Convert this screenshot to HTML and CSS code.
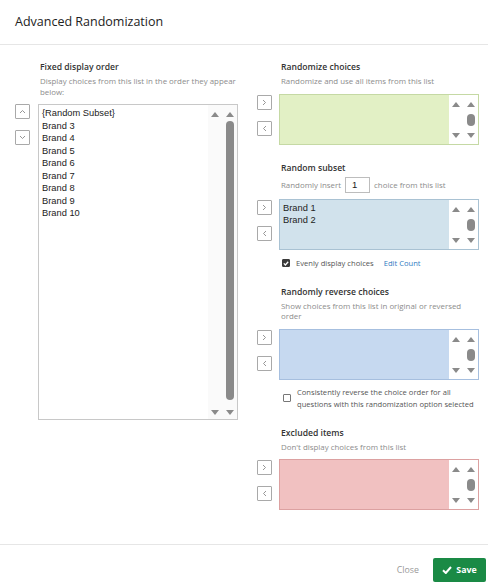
FILE: index.html
```html
<!DOCTYPE html>
<html lang="en">
<head>
  <meta charset="UTF-8" />
  <meta name="viewport" content="width=device-width, initial-scale=1.0" />
  <title>Advanced Randomization</title>
  <link rel="stylesheet" href="styles.css">
</head>
<body>
  <div class="modal">
    <header class="modal-head">
      <h1>Advanced Randomization</h1>
    </header>

    <main class="modal-body">
      <!-- left: fixed order -->
      <section class="pane pane-left">
        <div class="pane-head">
          <h2>Fixed display order</h2>
          <p class="desc">Display choices from this list in the order they appear below:</p>
        </div>
        <div class="btns">
          <button class="mv"><svg width="7" height="5" viewBox="0 0 7 5"><path d="M1 4 L3.5 1.5 L6 4" /></svg></button>
          <button class="mv"><svg width="7" height="5" viewBox="0 0 7 5"><path d="M1 1 L3.5 3.5 L6 1" /></svg></button>
        </div>
        <div class="box box-fixed">
          <ul class="items">
            <li>{Random Subset}</li>
            <li>Brand 3</li>
            <li>Brand 4</li>
            <li>Brand 5</li>
            <li>Brand 6</li>
            <li>Brand 7</li>
            <li>Brand 8</li>
            <li>Brand 9</li>
            <li>Brand 10</li>
          </ul>
          <div class="sbar">
            <div class="sb-col"><i class="ar-up"></i><i class="ar-dn"></i></div>
            <div class="sb-col"><i class="ar-up"></i><div class="track"><span class="thumb thumb-long"></span></div><i class="ar-dn"></i></div>
          </div>
        </div>
      </section>

      <div class="col-right">
        <section class="pane">
          <div class="pane-head">
            <h2>Randomize choices</h2>
            <p class="desc">Randomize and use all items from this list</p>
          </div>
          <div class="btns">
            <button class="mv"><svg width="5" height="7" viewBox="0 0 5 7"><path d="M1 1 L3.5 3.5 L1 6" /></svg></button>
            <button class="mv"><svg width="5" height="7" viewBox="0 0 5 7"><path d="M4 1 L1.5 3.5 L4 6" /></svg></button>
          </div>
          <div class="box box-green">
            <ul class="items"></ul>
            <div class="sbar">
              <div class="sb-col"><i class="ar-up"></i><i class="ar-dn"></i></div>
              <div class="sb-col"><i class="ar-up"></i><div class="track"><span class="thumb"></span></div><i class="ar-dn"></i></div>
            </div>
          </div>
        </section>

        <section class="pane">
          <div class="pane-head">
            <h2>Random subset</h2>
            <p class="desc desc-row">Randomly insert <span class="count">1</span> choice from this list</p>
          </div>
          <div class="btns">
            <button class="mv"><svg width="5" height="7" viewBox="0 0 5 7"><path d="M1 1 L3.5 3.5 L1 6" /></svg></button>
            <button class="mv"><svg width="5" height="7" viewBox="0 0 5 7"><path d="M4 1 L1.5 3.5 L4 6" /></svg></button>
          </div>
          <div class="box box-subset">
            <ul class="items">
              <li>Brand 1</li>
              <li>Brand 2</li>
            </ul>
            <div class="sbar">
              <div class="sb-col"><i class="ar-up"></i><i class="ar-dn"></i></div>
              <div class="sb-col"><i class="ar-up"></i><div class="track"><span class="thumb"></span></div><i class="ar-dn"></i></div>
            </div>
          </div>
          <label class="check">
            <span class="cb cb-on"><svg width="6" height="5" viewBox="0 0 6 5"><path d="M0.8 2.4 L2.4 4 L5.2 0.8" /></svg></span>
            <span>Evenly display choices</span>
            <a class="link">Edit Count</a>
          </label>
        </section>

        <section class="pane">
          <div class="pane-head">
            <h2>Randomly reverse choices</h2>
            <p class="desc">Show choices from this list in original or reversed order</p>
          </div>
          <div class="btns">
            <button class="mv"><svg width="5" height="7" viewBox="0 0 5 7"><path d="M1 1 L3.5 3.5 L1 6" /></svg></button>
            <button class="mv"><svg width="5" height="7" viewBox="0 0 5 7"><path d="M4 1 L1.5 3.5 L4 6" /></svg></button>
          </div>
          <div class="box box-reverse">
            <ul class="items"></ul>
            <div class="sbar">
              <div class="sb-col"><i class="ar-up"></i><i class="ar-dn"></i></div>
              <div class="sb-col"><i class="ar-up"></i><div class="track"><span class="thumb"></span></div><i class="ar-dn"></i></div>
            </div>
          </div>
          <label class="check check-wrap">
            <span class="cb"></span>
            <span>Consistently reverse the choice order for all questions with this randomization option selected</span>
          </label>
        </section>

        <section class="pane">
          <div class="pane-head">
            <h2>Excluded items</h2>
            <p class="desc">Don't display choices from this list</p>
          </div>
          <div class="btns">
            <button class="mv"><svg width="5" height="7" viewBox="0 0 5 7"><path d="M1 1 L3.5 3.5 L1 6" /></svg></button>
            <button class="mv"><svg width="5" height="7" viewBox="0 0 5 7"><path d="M4 1 L1.5 3.5 L4 6" /></svg></button>
          </div>
          <div class="box box-excluded">
            <ul class="items"></ul>
            <div class="sbar">
              <div class="sb-col"><i class="ar-up"></i><i class="ar-dn"></i></div>
              <div class="sb-col"><i class="ar-up"></i><div class="track"><span class="thumb"></span></div><i class="ar-dn"></i></div>
            </div>
          </div>
        </section>
      </div>
    </main>

    <footer class="modal-foot">
      <button class="btn-close">Close</button>
      <button class="btn-save"><svg width="10" height="8" viewBox="0 0 10 8"><path d="M1 4.2 L3.8 7 L9 1" /></svg>Save</button>
    </footer>
  </div>
</body>
</html>
```

FILE: styles.css
```css
body {
  margin: 0;
  background: white;
  font-family: 'Open Sans', sans-serif;
  color: #333;
}
.modal {
  width: 488px;
  height: 587px;
  background: white;
}
.modal-head {
  height: 45px;
  box-sizing: border-box;
  border-bottom: 1px solid #e6e6e6;
  display: flex;
  align-items: center;
  padding: 0 15px;
}
.modal-head h1 {
  margin: 0 0 2px 0;
  font-size: 12.5px;
  font-weight: 500;
  color: #222;
}
.modal-body {
  height: 499px;
  box-sizing: border-box;
  padding: 16px 10px 0 15px;
  display: flex;
  align-items: flex-start;
  gap: 19px;
}
.col-right {
  display: flex;
  flex-direction: column;
}
.pane {
  display: grid;
  grid-template-columns: 22px 200px;
  margin-bottom: 17px;
}
.pane-left {
  grid-template-columns: 23px 200px;
}
.pane-head {
  grid-column: 2;
  padding-left: 2px;
  margin-bottom: 7px;
}
.pane-head h2 {
  margin: 0;
  font-size: 8.6px;
  font-weight: 600;
  line-height: 13px;
  color: #333;
}
.desc {
  margin: 2px 0 0 0;
  font-size: 7.9px;
  line-height: 10.5px;
  color: #8c8c8c;
}
.desc-row {
  display: flex;
  align-items: center;
  gap: 4px;
  height: 17px;
  margin-bottom: -2px;
}
.count {
  display: inline-block;
  width: 25px;
  height: 16px;
  box-sizing: border-box;
  border: 1px solid #bdbdbd;
  font-family: 'Liberation Sans', Arial, sans-serif;
  font-size: 9.5px;
  line-height: 14px;
  color: #222;
  padding-left: 6px;
}
.btns {
  grid-column: 1;
  grid-row: 2;
  display: flex;
  flex-direction: column;
  gap: 11px;
  padding-top: 1px;
}
.pane-left .btns {
  padding-top: 0;
}
.mv {
  width: 15px;
  height: 15px;
  padding: 0;
  border: 1px solid #a9a9a9;
  border-radius: 1px;
  background: white;
  display: flex;
  align-items: center;
  justify-content: center;
}
.mv svg path {
  fill: none;
  stroke: #8a8a8a;
  stroke-width: 0.9;
}
.box {
  grid-column: 2;
  grid-row: 2;
  display: flex;
  height: 51px;
  box-sizing: border-box;
  border: 1px solid #c8c8c8;
}
.box-fixed {
  height: 316px;
  background: white;
}
.box-green {
  background: #e2f0c5;
  border-color: #c5d9a4;
}
.box-subset {
  background: #d1e2ec;
  border-color: #a9c2d3;
}
.box-reverse {
  background: #c6d9f0;
  border-color: #a6bfdf;
}
.box-excluded {
  background: #f1c1c1;
  border-color: #dca1a1;
}
.items {
  flex: 1;
  list-style: none;
  margin: 0;
  padding: 2px 0 0 3px;
  font-family: 'Liberation Sans', Arial, sans-serif;
  font-size: 9.3px;
  line-height: 12.5px;
  color: #222;
}
.sbar {
  width: 29px;
  background: white;
  display: flex;
  gap: 5px;
  padding: 0 0 0 2px;
  box-sizing: border-box;
}
.box-fixed .sbar {
  background: #fafafa;
}
.sb-col {
  width: 10px;
  display: flex;
  flex-direction: column;
  align-items: center;
  justify-content: space-between;
  padding: 7px 0 6px 0;
}
.box-fixed .sb-col {
  padding-bottom: 4px;
}
.ar-up, .ar-dn {
  width: 0;
  height: 0;
  border-left: 4px solid transparent;
  border-right: 4px solid transparent;
}
.ar-up {
  border-bottom: 5px solid #8a8a8a;
}
.ar-dn {
  border-top: 5px solid #8a8a8a;
}
.track {
  flex: 1;
  display: flex;
  flex-direction: column;
  justify-content: center;
  padding: 4px 0 10px 0;
}
.box:not(.box-fixed) .track {
  padding: 0;
}
.thumb {
  display: block;
  width: 8px;
  height: 12px;
  border-radius: 4px;
  background: #8a8a8a;
}
.thumb-long {
  flex: 1;
}
.check {
  grid-column: 2;
  display: flex;
  align-items: center;
  gap: 6px;
  margin-top: 8px;
  padding-left: 3px;
  font-size: 7.6px;
  line-height: 11px;
  color: #555;
}
.check-wrap {
  margin-top: 6px;
  line-height: 12px;
  padding-left: 4px;
}
.cb {
  flex: none;
  width: 8px;
  height: 8px;
  box-sizing: border-box;
  border: 1px solid #777;
  border-radius: 1px;
  background: white;
  display: flex;
  align-items: center;
  justify-content: center;
}
.cb-on {
  background: #3a3a3a;
  border-color: #3a3a3a;
}
.cb-on svg path {
  fill: none;
  stroke: white;
  stroke-width: 1.3;
}
.link {
  color: #2f7bbf;
  margin-left: 4px;
}
.modal-foot {
  border-top: 1px solid #e6e6e6;
  display: flex;
  justify-content: flex-end;
  align-items: flex-start;
  gap: 14px;
  padding: 13px 2px 0 0;
}
.btn-close {
  border: none;
  background: none;
  padding: 0;
  height: 24px;
  font-family: 'Open Sans', sans-serif;
  font-size: 8.8px;
  color: #999;
}
.btn-save {
  width: 53px;
  height: 24px;
  border: none;
  border-radius: 2px;
  background: #1a8a45;
  color: white;
  font-family: 'Open Sans', sans-serif;
  font-size: 8.8px;
  font-weight: 700;
  display: flex;
  align-items: center;
  justify-content: center;
  gap: 4px;
  padding: 0;
}
.btn-save svg path {
  fill: none;
  stroke: white;
  stroke-width: 2;
}
```
